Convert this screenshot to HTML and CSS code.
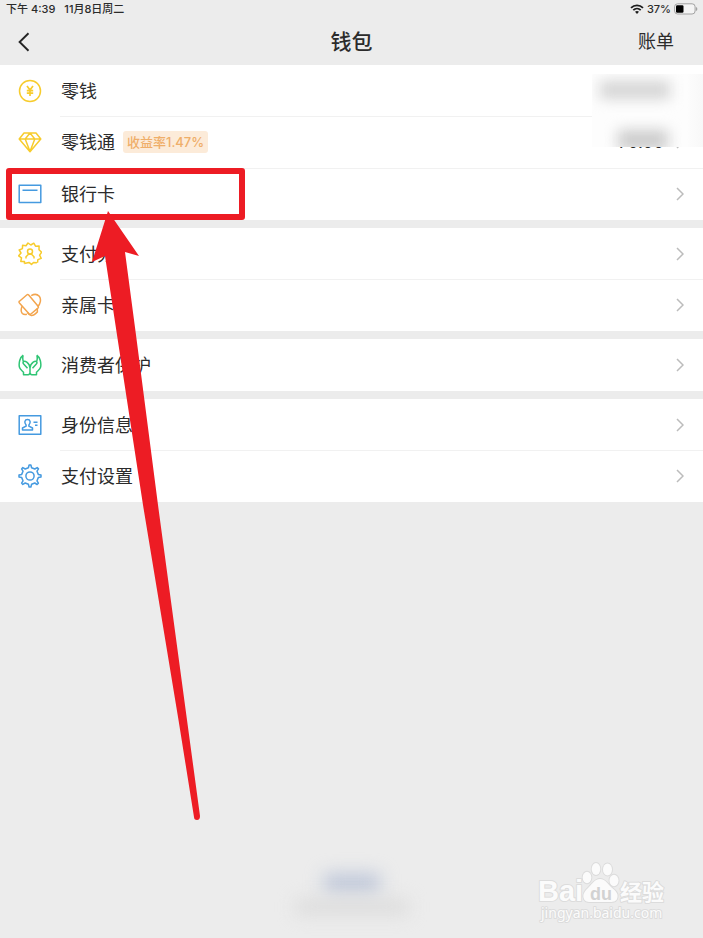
FILE: index.html
```html
<!DOCTYPE html>
<html lang="zh-CN">
<head>
<meta charset="utf-8">
<meta name="viewport" content="width=device-width, initial-scale=1">
<title>钱包</title>
<link rel="stylesheet" href="styles.css">
</head>
<body>
<div class="page">
  <header class="header">
    <div class="status">
      <span>下午 4:39</span>
      <span>11月8日周二</span>
      <span class="status-right">
        <svg width="14" height="10" viewBox="0 0 14 10" aria-hidden="true"><g fill="none" stroke="#1c1c1c" stroke-width="1.8"><path d="M1 3.8A8.6 8.6 0 0 1 13 3.8"/><path d="M3.3 6.2A5.3 5.3 0 0 1 10.7 6.2"/></g><path d="M5 7.8A3 3 0 0 1 9 7.8L7 9.9Z" fill="#1c1c1c"/></svg>
        <span>37%</span>
        <svg width="24" height="12" viewBox="0 0 24 12" aria-hidden="true"><rect x=".6" y=".8" width="20.5" height="10.2" rx="3" fill="#f4f4f4" stroke="#a2a2a2"/><rect x="2" y="2.2" width="7.5" height="7.5" rx="1.2" fill="#000"/><path d="M22 4v4q1.4-.6 1.4-2T22 4Z" fill="#a2a2a2"/></svg>
      </span>
    </div>
    <nav class="nav">
      <button class="back" type="button" aria-label="返回"><svg width="12" height="20" viewBox="0 0 12 20"><path d="M10.5 1.2 1.6 10l8.9 8.8" fill="none" stroke="#242424" stroke-width="1.9"/></svg></button>
      <h1>钱包</h1>
      <button class="bill" type="button">账单</button>
    </nav>
  </header>

  <main class="groups">
    <ul class="group">
      <li><a class="row" href="#">
        <svg class="icon yellow" viewBox="0 0 24 24"><circle cx="12" cy="12" r="10.5"/><path stroke-width="1.7" d="m9 7 3 4 3-4M12 11v6M8.8 11.6h6.4M8.8 14.2h6.4"/></svg>
        <span class="label">零钱</span>
      </a></li>
      <li><a class="row" href="#">
        <svg class="icon yellow" viewBox="0 0 24 24"><path d="M6 3h12l4.8 6L12 21.8 1.2 9ZM1.2 9h21.6M7.2 9 12 3l4.8 6L12 21.5Z"/></svg>
        <span class="label">零钱通</span><span class="badge">收益率1.47%</span>
        <span class="value">70.00</span>
        <svg class="chevron" viewBox="0 0 8 14"><path d="m1 1 6 6-6 6"/></svg>
      </a></li>
      <li class="marked"><a class="row" href="#">
        <svg class="icon blue" viewBox="0 0 24 24"><path d="M1.2 3.2h21.6v17.4H1.2ZM4.5 8.2h15"/></svg>
        <span class="label">银行卡</span>
        <svg class="chevron" viewBox="0 0 8 14"><path d="m1 1 6 6-6 6"/></svg>
      </a></li>
      <li class="mosaic" aria-hidden="true"><i></i><i></i></li>
    </ul>

    <ul class="group">
      <li><a class="row" href="#">
        <svg class="icon yellow" viewBox="0 0 24 24"><path d="m6.300 21.500.2-2-3.700-.1.700-3.600-2.800-2L3 11 1.200 8l3.200-1.400.2-3.300 3.400.5 2-2.800L12.800 3l3-1.800 1.700 3 3.600-.1-.1 3.600 2.600 2.500-2 2.900 1.600 3.300-3.300 1.200-.4 3.100M18.900 20.700l-3.400-.2-2 1.900-2.500-2-4.700 1.100"/><circle cx="12" cy="9.500" r="2.500"/><path d="M8 16.500v-1.800l2.500-2.400h3l2.500 2.400v1.800"/></svg>
        <span class="label">支付分</span>
        <svg class="chevron" viewBox="0 0 8 14"><path d="m1 1 6 6-6 6"/></svg>
      </a></li>
      <li><a class="row" href="#">
        <svg class="icon orange" viewBox="0 0 24 24"><path d="M1.500 8.200 8.700 2q1.100-.9 2 .1l9.400 11.100q.8 1-.2 1.900l-7 5.900q-1 .8-1.900-.2L1.400 9.900q-.8-1 .1-1.700Z"/><path d="M13.200 2.600Q18-.1 21.300 3.200c2.200 3 1.100 7.700-1.600 10.400M4.100 13.300q-2 4.600.2 7.200 1.700 1.500 4.600.8M9.400 19.500q3.800 5.400 8.200 1.100l1.800-1.700-.1-3.300"/></svg>
        <span class="label">亲属卡</span>
        <svg class="chevron" viewBox="0 0 8 14"><path d="m1 1 6 6-6 6"/></svg>
      </a></li>
    </ul>

    <ul class="group">
      <li><a class="row" href="#">
        <svg class="icon green" viewBox="0 0 24 24"><path d="M5.200 2.200C1.800 4.400.6 10 1.400 14.200c.5 2.400 2.500 3.400 4.100 5v2.600h4.600q1.900-.2 1.900-2.200V15c0-2.300-1-4.100-3.200-5.800Q6.600 7.500 5.400 8.800q-.9 1.200.5 2.500l3.600 4M5.400 8.800Q4.200 5.200 5.200 2.200M18.800 2.200c3.400 2.200 4.600 7.800 3.800 12-.5 2.400-2.500 3.400-4.100 5v2.600h-4.600q-1.900-.2-1.900-2.200V15c0-2.300 1-4.100 3.200-5.800q2.200-1.700 3.400-.4.900 1.200-.5 2.500l-3.600 4M18.600 8.800q1.200-3.600.2-6.600"/></svg>
        <span class="label">消费者保护</span>
        <svg class="chevron" viewBox="0 0 8 14"><path d="m1 1 6 6-6 6"/></svg>
      </a></li>
    </ul>

    <ul class="group">
      <li><a class="row" href="#">
        <svg class="icon blue" viewBox="0 0 24 24"><path d="M1.200 2.800h21.600v18.400H1.200Z"/><path d="M4.500 17v-2l3.600-1.800v-1.100C5.900 9.500 6.700 6.500 9.500 6.500s3.600 3 1.400 5.600v1.100l3.600 1.800v2ZM15.500 9.200h4M17 12.200h2.500"/></svg>
        <span class="label">身份信息</span>
        <svg class="chevron" viewBox="0 0 8 14"><path d="m1 1 6 6-6 6"/></svg>
      </a></li>
      <li><a class="row" href="#">
        <svg class="icon blue" viewBox="0 0 24 24"><path d="m10.400 3.700.7-2.700h1.800l.7 2.700 3.200 1.300 2.400-1.400 1.300 1.300L19 7.200l1.300 3.200 2.700.7v1.800l-2.700.7-1.300 3.200 1.400 2.400-1.300 1.300-2.300-1.500-3.200 1.300-.7 2.700h-1.800l-.7-2.700L7.200 19l-2.400 1.400-1.200-1.300L5 16.800l-1.300-3.200-2.700-.7v-1.800l2.700-.7L5 7.200 3.600 4.900l1.200-1.300L7.200 5Z"/><circle cx="12" cy="12" r="4.100"/></svg>
        <span class="label">支付设置</span>
        <svg class="chevron" viewBox="0 0 8 14"><path d="m1 1 6 6-6 6"/></svg>
      </a></li>
    </ul>
  </main>

  <footer class="footer" aria-hidden="true"><i class="smudge-link"></i><i class="smudge-note"></i></footer>

  <svg class="arrow" width="120" height="620" viewBox="86 206 120 620" aria-hidden="true"><path fill="#ed1c24" d="M108 211 139 256 125 252 136 335 158 505 187 720 200 816Q200 820 197 820 194 820 194 817L178.500 720 143 505 117 335 105 256 92 262Z"/></svg>

  <svg class="watermark" width="136" height="66" viewBox="535 858 136 66" aria-hidden="true">
    <g fill="#fbfbfb" stroke="#dcdcdc" stroke-width="2" stroke-linejoin="round" paint-order="stroke">
      <text class="wm-logo" x="538" y="901">Bai</text>
      <ellipse cx="587" cy="877.500" rx="4.300" ry="5.800"/><ellipse cx="596" cy="869" rx="4.300" ry="6"/><ellipse cx="607.500" cy="869.500" rx="4.500" ry="6"/><ellipse cx="614" cy="880.500" rx="4.500" ry="5.800"/>
      <path d="M600 879c5 0 7 4 11 8 5 4 8 7 6 12-2 4-7 3-17 3s-14 1-16-3c-2-5 1-8 5-12 4-4 6-8 11-8Z"/>
      <text class="wm-cn" x="620" y="900">经验</text>
      <text class="wm-url" x="541" y="918">jingyan.baidu.com</text>
    </g>
    <text class="wm-du" x="590" y="900">du</text>
  </svg>
</div>
</body>
</html>
```
FILE: styles.css
```css
*,
*::before,
*::after {
  box-sizing: border-box;
}

body {
  margin: 0;
  background: #ececec;
  color: #2b2b2b;
  font-family: Inter, "Noto Sans CJK SC", sans-serif;
}

.page {
  position: relative;
  display: flex;
  flex-direction: column;
  min-height: 100vh;
  overflow: hidden;
}

.header {
  background: #ececec;
}

.status {
  display: flex;
  align-items: center;
  gap: 9px;
  height: 18px;
  padding: 0 5px 0 6px;
  font-size: 11px;
  font-weight: 500;
  line-height: 18px;
}

.status-right {
  display: flex;
  align-items: center;
  gap: 3px;
  margin-left: auto;
}

.nav {
  display: grid;
  grid-template-columns: 1fr auto 1fr;
  align-items: center;
  height: 47px;
  padding: 0 18px;
}

.nav button {
  padding: 0;
  border: 0;
  background: none;
  color: inherit;
  font: inherit;
}

.back {
  justify-self: start;
  display: flex;
}

.nav h1 {
  margin: 0;
  font-size: 21px;
  font-weight: 500;
  line-height: 28px;
}

.nav .bill {
  justify-self: end;
  margin-right: 11px;
  font-size: 18px;
  line-height: 28px;
}

.groups {
  display: flex;
  flex-direction: column;
  gap: 8px;
}

.group {
  position: relative;
  min-height: 52px;
  margin: 0;
  padding: 0;
  background: #fff;
  list-style: none;
}

.row {
  position: relative;
  display: flex;
  align-items: center;
  height: 51px;
  padding: 0 19px 0 18px;
  color: inherit;
  text-decoration: none;
}

.group li + li .row {
  height: 52px;
}

.group li + li .row::before {
  content: "";
  position: absolute;
  top: 0;
  left: 60px;
  right: 0;
  height: 1px;
  background: #f1f1f1;
}

.icon {
  flex: none;
  width: 24px;
  height: 24px;
  margin-right: 19px;
  fill: none;
  stroke: currentColor;
  stroke-width: 1.5;
  stroke-linejoin: round;
}

.yellow { color: #f7cc2d; }
.orange { color: #f3a54e; }
.green { color: #2fc574; }
.blue { color: #459ae0; }

.label {
  padding-top: 2px;
  font-size: 18px;
  line-height: 26px;
}

.badge {
  margin-left: 8px;
  padding: 0 4px;
  border-radius: 3px;
  background: #fcebd9;
  color: #efae69;
  font-size: 13px;
  font-weight: 500;
  line-height: 22px;
}

.chevron {
  width: 8px;
  height: 14px;
  margin-left: auto;
  fill: none;
  stroke: #bcbcbc;
  stroke-width: 1.5;
}

.value {
  margin-left: auto;
  font-size: 17px;
  line-height: 24px;
}

.value + .chevron {
  margin-left: 12px;
}

.marked {
  position: relative;
}

.marked::after {
  content: "";
  position: absolute;
  left: 6px;
  bottom: 0;
  width: 239px;
  height: 52px;
  border: 6px solid #ed1c24;
  border-radius: 3px;
}

.mosaic {
  position: absolute;
  top: 9px;
  right: 0;
  width: 111px;
  height: 73px;
  overflow: hidden;
  background: linear-gradient(90deg, #fdfdfd 85%, #f8f8f8);
}

.mosaic i {
  position: absolute;
  top: 7px;
  left: 8px;
  width: 70px;
  height: 18px;
  background: #d4d4d4;
  filter: blur(7px);
}

.mosaic i + i {
  top: 56px;
  left: 26px;
  width: 50px;
  height: 20px;
  background: #cbcbcb;
}

.footer {
  display: flex;
  flex-direction: column;
  align-items: center;
  gap: 8px;
  margin-top: auto;
  padding-bottom: 24px;
}

.footer i {
  filter: blur(9px);
}

.smudge-link {
  width: 56px;
  height: 18px;
  background: #bcc5d8;
}

.smudge-note {
  width: 112px;
  height: 14px;
  background: #dadada;
}

.arrow {
  position: absolute;
  top: 206px;
  left: 86px;
}

.watermark {
  position: absolute;
  right: 32px;
  bottom: 14px;
}

.wm-logo {
  font: bold 29px "Liberation Sans", sans-serif;
}

.wm-du {
  fill: #d2d2d2;
  font: bold 18px "Liberation Sans", sans-serif;
}

.wm-cn {
  font: bold 22px "Noto Sans CJK SC", sans-serif;
}

.wm-url {
  font: 14px "Noto Sans", sans-serif;
}
```
